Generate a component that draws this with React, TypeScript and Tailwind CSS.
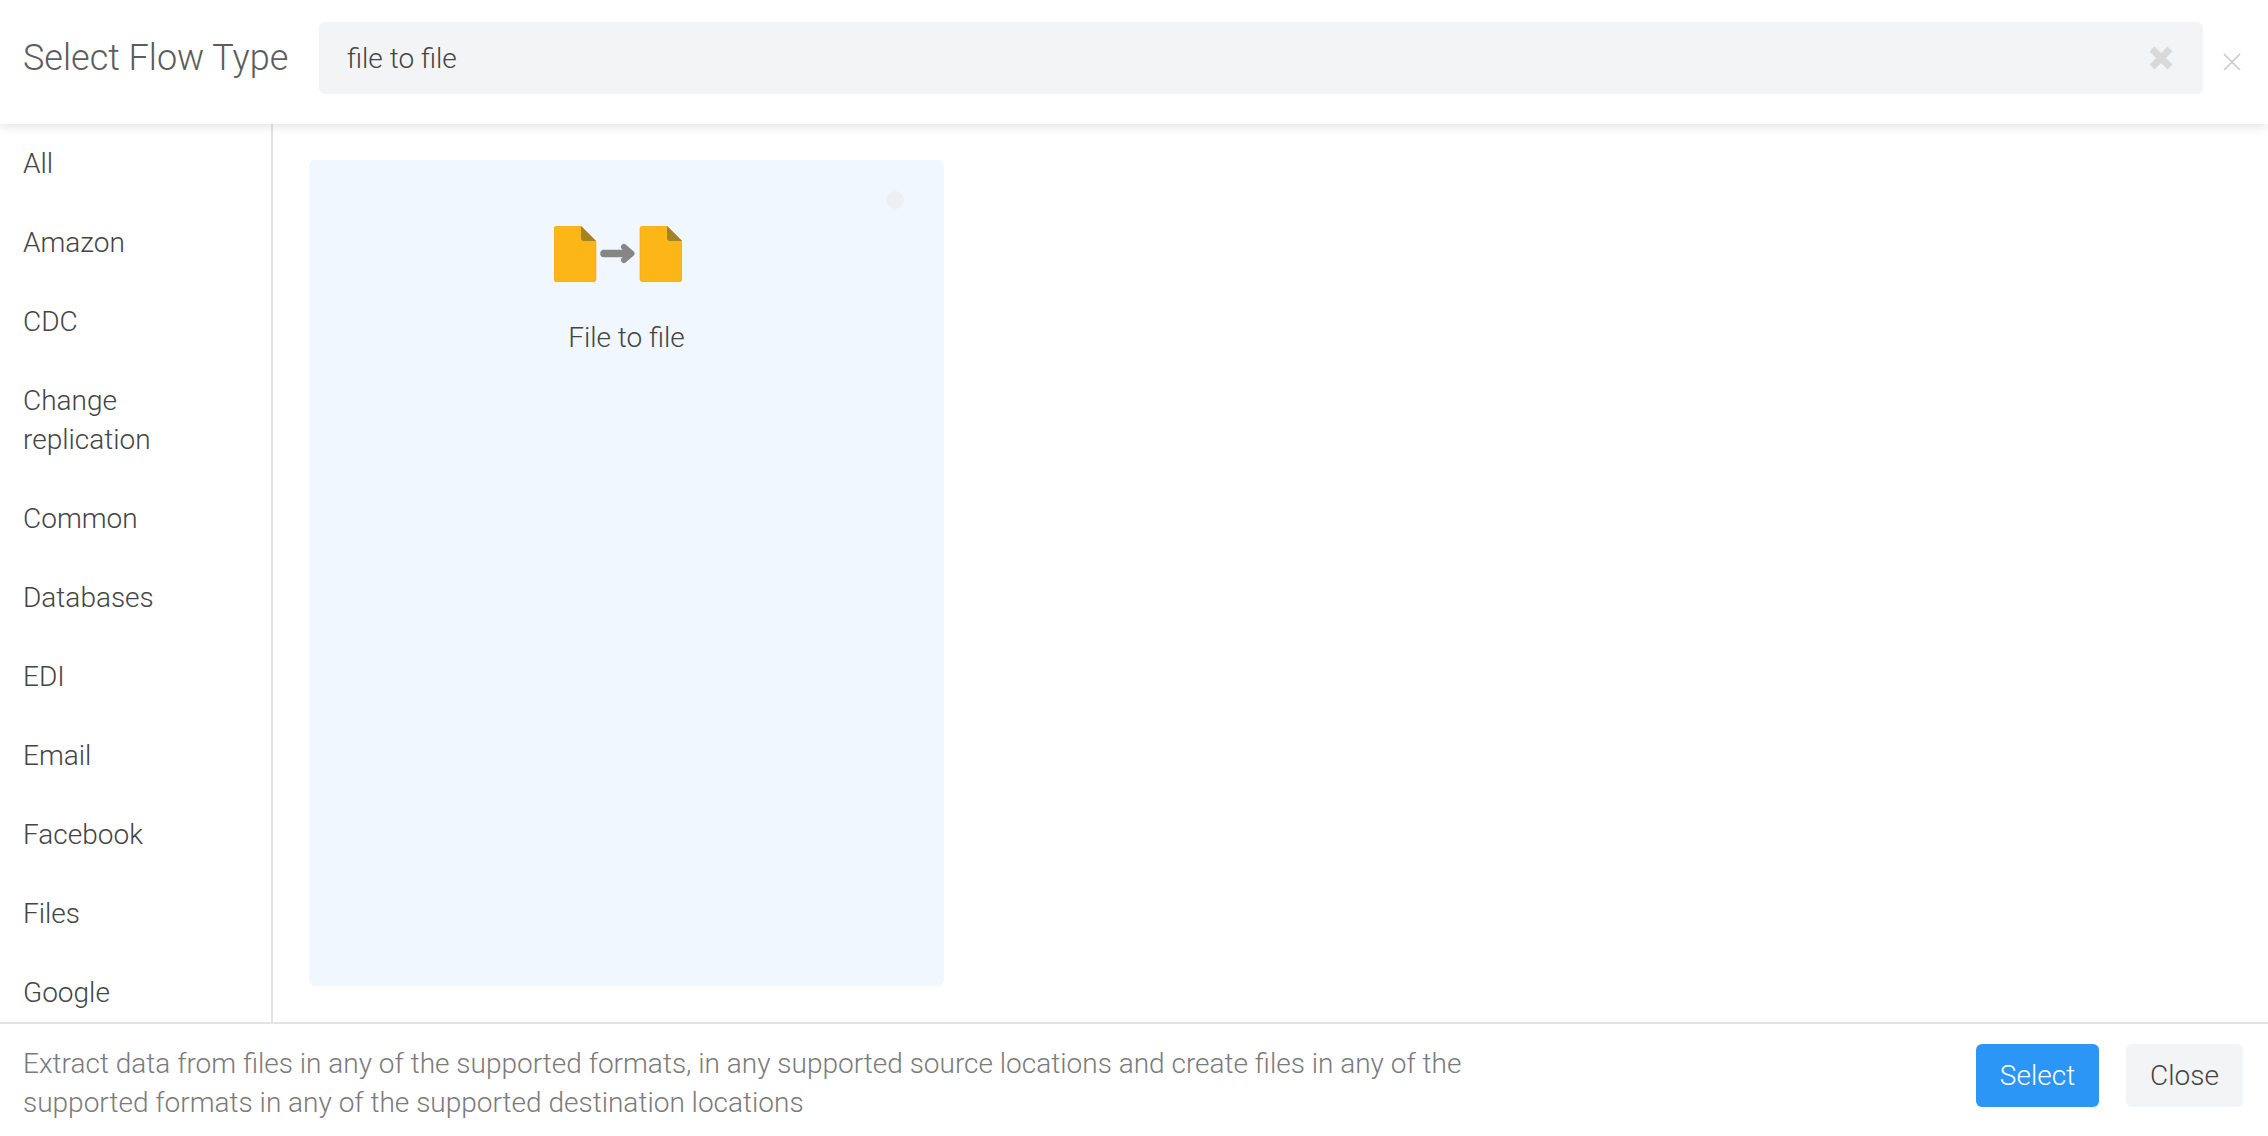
const CATEGORIES = [
  "All",
  "Amazon",
  "CDC",
  "Change replication",
  "Common",
  "Databases",
  "EDI",
  "Email",
  "Facebook",
  "Files",
  "Google",
];

function FileGlyph({ x }: { x: number }) {
  return (
    <g transform={`translate(${x} 0)`}>
      <path d="M3 0h24l15 15v38a3 3 0 0 1-3 3H3a3 3 0 0 1-3-3V3a3 3 0 0 1 3-3z" fill="#fcb617" stroke="#e6a82a" strokeWidth="0.6" />
      <path d="M27 0l15 15H30a3 3 0 0 1-3-3z" fill="#a58226" />
    </g>
  );
}

function FlowIcon() {
  return (
    <svg width="128" height="56" viewBox="0 0 128 56" className="block">
      <FileGlyph x={0} />
      <FileGlyph x={86} />
      <path d="M50 27.5h24" stroke="#868686" strokeWidth="7.5" strokeLinecap="round" />
      <path d="M70 21l7.5 6.5-7.5 6.5" fill="none" stroke="#868686" strokeWidth="6" strokeLinecap="round" strokeLinejoin="round" />
    </svg>
  );
}

export default function App() {
  return (
    <div className="flex h-screen flex-col overflow-hidden bg-white font-['Roboto',sans-serif] font-light text-[#444]">
      <header className="relative z-10 flex h-[124px] shrink-0 items-start bg-white shadow-[0_2px_10px_rgba(0,0,0,0.12)]">
        <h1 className="mt-[22px] w-[319px] shrink-0 pl-[23px] text-[36px] leading-[72px] font-light text-[#5c5c5c]">
          Select Flow Type
        </h1>
        <div className="mt-[22px] flex h-[72px] w-[1884px] shrink-0 items-center justify-between rounded-md bg-[#f3f4f6] pr-[30px] pl-[28px]">
          <input
            readOnly
            value="file to file"
            className="w-[600px] bg-transparent pt-px text-[28px] font-light text-[#444] outline-none"
          />
          <svg width="24" height="24" viewBox="0 0 24 24">
            <path d="M3 3l18 18M21 3L3 21" stroke="#d9d9d9" strokeWidth="7" />
          </svg>
        </div>
        <svg width="18" height="18" viewBox="0 0 18 18" className="mt-[53px] ml-[20px]">
          <path d="M1 1l16 16M17 1L1 17" stroke="#c9c9c9" strokeWidth="1.6" />
        </svg>
      </header>

      <div className="flex min-h-0 flex-1">
        <nav className="w-[273px] shrink-0 overflow-hidden border-r-2 border-[#e3e3e3]">
          {CATEGORIES.map((name) => (
            <div key={name} className="py-5 pr-[80px] pl-[23px] text-[28px] leading-[39px]">
              {name}
            </div>
          ))}
        </nav>
        <main className="min-w-0 flex-1 pt-[36px] pl-[36px]">
          <div className="relative flex h-[826px] w-[635px] flex-col items-center rounded-md bg-[#f1f7fe] pt-[66px]">
            <span className="absolute top-[31px] right-[40px] h-[18px] w-[18px] rounded-full bg-[#eeeff1]" />
            <div className="mr-[18px]">
              <FlowIcon />
            </div>
            <p className="mt-[36px] text-[28px] leading-[39px]">File to file</p>
          </div>
        </main>
      </div>

      <footer className="flex h-[114px] shrink-0 items-start justify-between border-t-2 border-[#e3e3e3] pr-[25px] pl-[23px]">
        <p className="mt-[20px] max-w-[1480px] text-[28px] leading-[39px] text-[#7a7a7a]">
          Extract data from files in any of the supported formats, in any supported source locations and create files in any of the supported formats in any of the supported destination locations
        </p>
        <div className="mt-[20px] flex gap-[27px]">
          <button className="h-[63px] w-[123px] rounded-md bg-[#2b96f5] text-[28px] font-light text-white">Select</button>
          <button className="h-[63px] w-[117px] rounded-md bg-[#f3f4f6] text-[28px] font-light text-[#444]">Close</button>
        </div>
      </footer>
    </div>
  );
}
